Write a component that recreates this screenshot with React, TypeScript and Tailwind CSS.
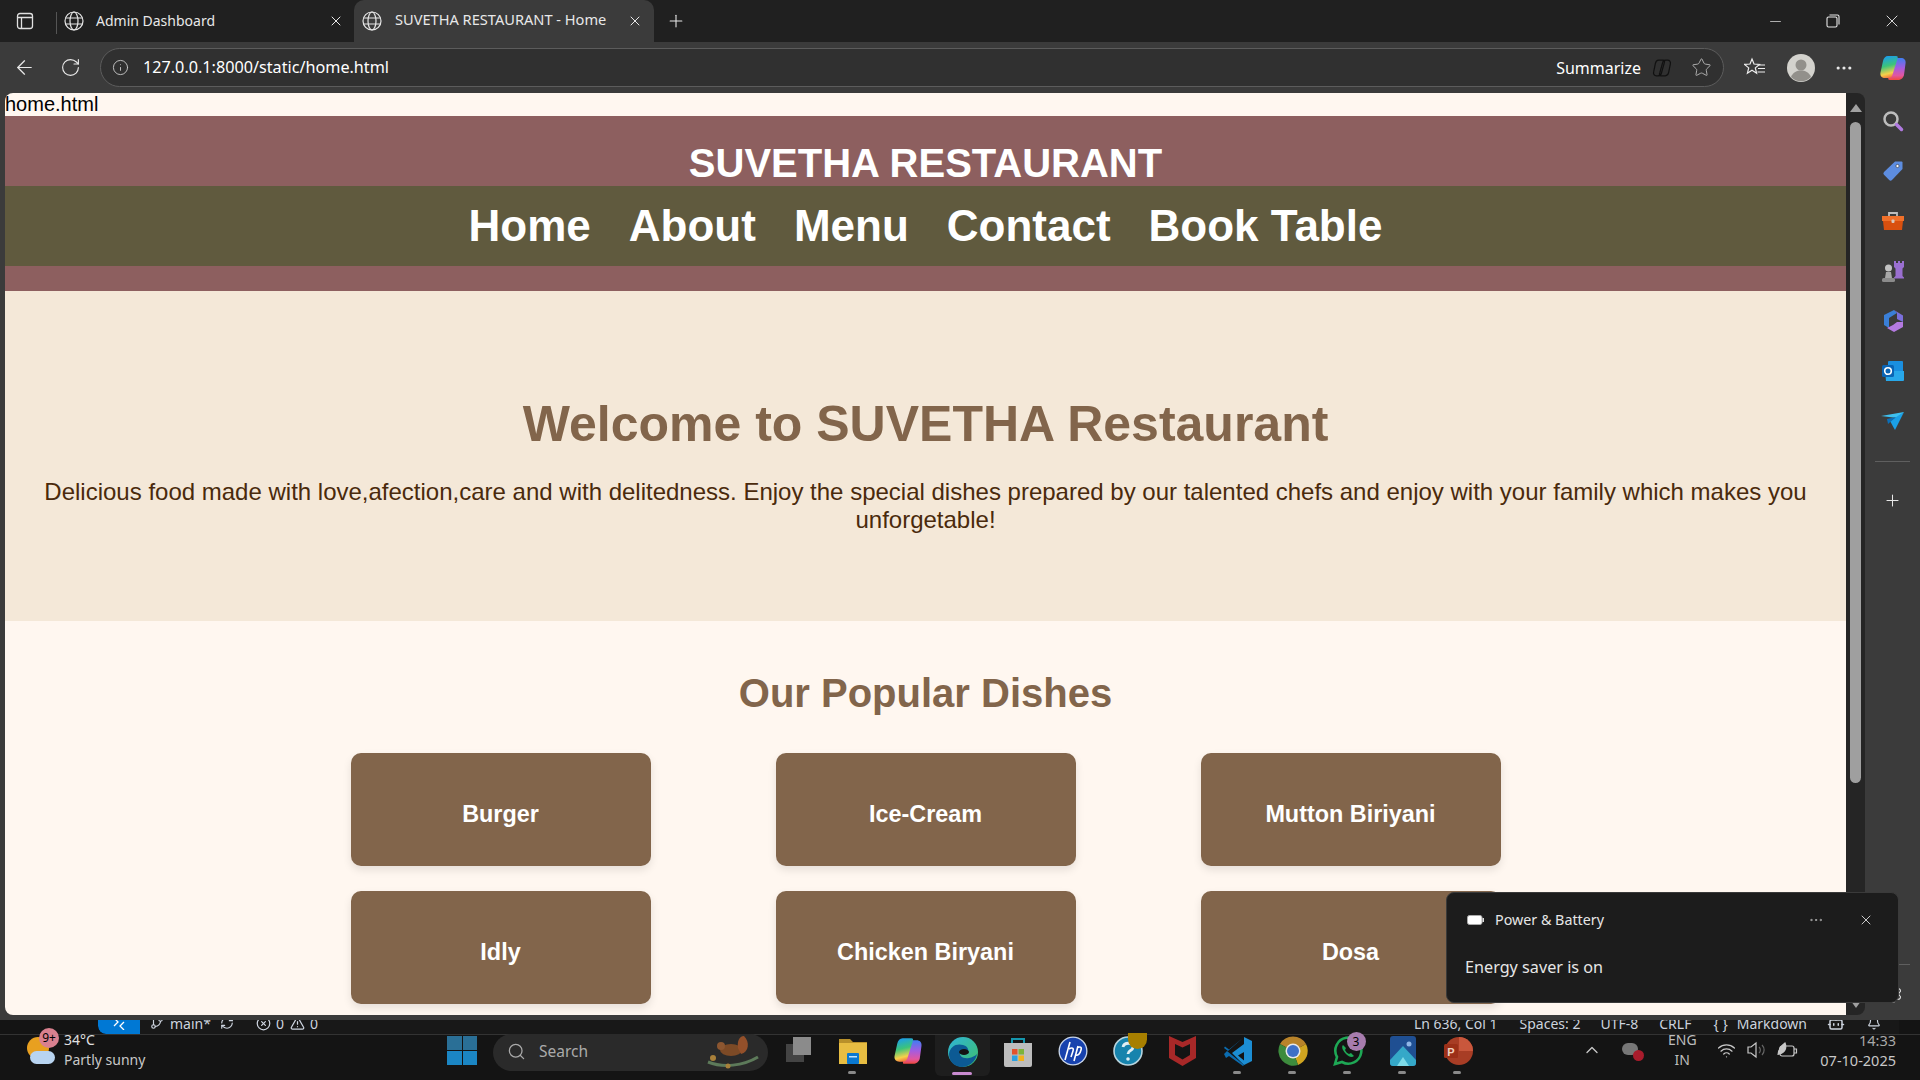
import React from 'react';
import { ArrowLeft, RotateCw, Info, Plus, X, Minus, Star, MoreHorizontal, ChevronUp, Wifi, Search, GitBranch, RefreshCw, CircleX, TriangleAlert, Bell, Bot, Settings } from 'lucide-react';

const uiFont = 'font-["Noto_Sans",sans-serif]';
const pageFont = 'font-["Liberation_Sans",Arial,sans-serif]';

const Globe = () => (
  <svg width="20" height="20" viewBox="0 0 20 20" fill="none" stroke="#e6e6e6" strokeWidth="1.2" className="shrink-0">
    <circle cx="10" cy="10" r="9" />
    <ellipse cx="10" cy="10" rx="4" ry="9" />
    <path d="M1.500 7h17M1.500 13h17" />
  </svg>
);

const Copilot = ({ size = 26 }: { size?: number }) => (
  <svg width={size} height={size} viewBox="0 0 28 28">
    <defs>
      <linearGradient id="cpa" x1="0.300" y1="0" x2="0.500" y2="1">
        <stop offset="0" stopColor="#1a9cf0" />
        <stop offset="0.45" stopColor="#3cc47a" />
        <stop offset="0.8" stopColor="#f6d14a" />
        <stop offset="1" stopColor="#f2703c" />
      </linearGradient>
      <linearGradient id="cpb" x1="0.500" y1="0" x2="0.500" y2="1">
        <stop offset="0" stopColor="#3f7ef0" />
        <stop offset="0.45" stopColor="#a45ce0" />
        <stop offset="0.8" stopColor="#e2569f" />
        <stop offset="1" stopColor="#f0483c" />
      </linearGradient>
    </defs>
    <path d="M19 26h-8c-2 0-2-1-1.400-3l5-16c.8-2.400 2-3 4-3h3.400c3 0 5 2 4.600 5L25 21c-.6 3-3.500 5-6 5z" fill="url(#cpb)" />
    <path d="M9 2h8c2 0 2 1 1.400 3l-5 16c-.8 2.400-2 3-4 3H6c-3 0-5-2-4.600-5L4 7c.6-3 2.500-5 5-5z" fill="url(#cpa)" />
  </svg>
);

const sideIcons = [
  <svg key="s" width="22" height="22" viewBox="0 0 22 22" fill="none">
    <circle cx="9" cy="9" r="6.500" stroke="#bdbdbd" strokeWidth="2.500" />
    <path d="M14.500 14.500l5 5" stroke="#b07ae0" strokeWidth="3.500" strokeLinecap="round" />
  </svg>,
  <svg key="t" width="22" height="22" viewBox="0 0 22 22">
    <path d="M13 1.500h6.500a1 1 0 011 1V9L10 20a2 2 0 01-2.800 0L2 14.800a2 2 0 010-2.800z" fill="#5d8de0" />
    <circle cx="15.500" cy="6" r="1.600" fill="#fff" stroke="#333" strokeWidth=".6" />
  </svg>,
  <svg key="b" width="24" height="22" viewBox="0 0 24 22">
    <path d="M8 6V3h8v3" fill="none" stroke="#bdbdbd" strokeWidth="1.800" />
    <rect x="1" y="6" width="22" height="5" fill="#f0702a" />
    <path d="M2 11h20l-1 9H3z" fill="#d9500f" />
    <rect x="10.500" y="9.500" width="3" height="3.500" rx="1" fill="#d8c9bd" />
  </svg>,
  <svg key="c" width="24" height="24" viewBox="0 0 24 24">
    <path d="M13 2h2v2h2V2h2v2h2V2h2v6l-1.500 1.500V17l1.500 1.500v1H13v-1l1.500-1.500V9.500L13 8z" fill="#9a6fd0" />
    <circle cx="7.500" cy="9" r="3.500" fill="#c2c2c2" />
    <path d="M5 13h5l1 6H4z" fill="#a8a8a8" />
    <rect x="1" y="19" width="13" height="4" rx="1.500" fill="#8b8b8b" />
  </svg>,
  <svg key="m" width="22" height="24" viewBox="0 0 22 24" fill="none">
    <path d="M12 1L2 6v10l5 3V9l8-5z" fill="#3a7fd8" />
    <path d="M12 1l9 5.500V13l-6-3V4z" fill="#7b6fdc" />
    <path d="M21 13v5l-9 5-7-4 6-3 4-3z" fill="#b47ae0" />
  </svg>,
  <svg key="o" width="22" height="22" viewBox="0 0 22 22">
    <rect x="6" y="1" width="15" height="12" rx="1" fill="#1a8fe0" />
    <path d="M3 11h19v9a1 1 0 01-1 1H4z" fill="#28a8ea" />
    <rect x="0" y="5" width="12" height="12" rx="1.500" fill="#0a64b4" />
    <circle cx="6" cy="11" r="3.300" fill="none" stroke="#fff" strokeWidth="1.600" />
  </svg>,
  <svg key="p" width="24" height="20" viewBox="0 0 24 20">
    <path d="M0 5l23-4-7 6z" fill="#3ec1f0" />
    <path d="M23 1l-9 18-5-9z" fill="#1ba0e6" />
    <path d="M6 8l9-2-8 7z" fill="#0b6fb8" />
  </svg>,
];

const TabBar = () => (
  <div className={`h-[42px] shrink-0 bg-[#202020] flex items-center text-[#e8e8e8] text-[14px] ${uiFont}`}>
    <div className="w-[56px] h-full flex items-center justify-center pr-[6px]">
      <svg width="18" height="18" viewBox="0 0 18 18" fill="none" stroke="#e0e0e0" strokeWidth="1.300">
        <rect x="1.500" y="1.500" width="15" height="15" rx="2.500" />
        <path d="M1.500 5.500h15M5.500 5.500v11" />
      </svg>
    </div>
    <div className="w-[298px] h-full flex items-center relative pl-[8px] pr-[10px]">
      <div className="absolute left-0 top-[12px] h-[22px] w-px bg-[#555]" />
      <Globe />
      <span className="ml-[12px] flex-1 -mt-[2px]">Admin Dashboard</span>
      <X size={16} strokeWidth={1.500} />
    </div>
    <div className="w-[300px] h-full bg-[#3b3b3b] rounded-t-[10px] flex items-center pl-[8px] pr-[11px]">
      <Globe />
      <span className="ml-[13px] flex-1 whitespace-nowrap text-[14.600px] -mt-[2px]">SUVETHA RESTAURANT - Home</span>
      <X size={16} strokeWidth={1.500} />
    </div>
    <Plus size={20} strokeWidth={1.300} className="ml-[12px]" />
    <div className="ml-auto flex items-center h-full">
      <div className="w-[58px] flex justify-center"><Minus size={17} strokeWidth={1} /></div>
      <div className="w-[58px] flex justify-center">
        <svg width="14" height="14" viewBox="0 0 14 14" fill="none" stroke="#e8e8e8" strokeWidth="1.100">
          <rect x="1" y="3" width="10" height="10" rx="1.500" />
          <path d="M3.500 1h8a1.500 1.500 0 011.500 1.500v8" />
        </svg>
      </div>
      <div className="w-[58px] flex justify-center pl-[1px]"><X size={20} strokeWidth={1.100} /></div>
    </div>
  </div>
);

const Toolbar = () => (
  <div className={`h-[51px] shrink-0 bg-[#3b3b3b] flex items-center text-[#e8e8e8] ${uiFont}`}>
    <div className="w-[48px] flex justify-center"><ArrowLeft size={23} strokeWidth={1.300} /></div>
    <div className="w-[44px] flex justify-center"><RotateCw size={21} strokeWidth={1.300} /></div>
    <div className="ml-[8px] w-[1624px] h-[39px] bg-[#303030] border border-[#5c5c5c] rounded-full flex items-center pl-[11px] pr-[11px]">
      <Info size={17} strokeWidth={1.300} className="text-[#c8c8c8]" />
      <span className="ml-[14px] text-[16.200px] text-white">127.0.0.1:8000/static/home.html</span>
      <span className="ml-auto text-[16px] text-white mt-[1px]">Summarize</span>
      <svg width="20" height="20" viewBox="0 0 18 18" fill="none" stroke="#111" strokeWidth="1.100" className="ml-[11px]">
        <path d="M6 2h4c1.500 0 1.500 1 1 2.500l-2.500 9C8 15.500 7 16 5.500 16H4c-2 0-3-1.500-2.500-3.500L3 5c.4-2 1.500-3 3-3z" />
        <path d="M12 16H8c-1.500 0-1.500-1-1-2.500l2.500-9C10 2.500 11 2 12.500 2H14c2 0 3 1.500 2.500 3.500L15 13c-.4 2-1.500 3-3 3z" />
      </svg>
      <Star size={21} strokeWidth={1.100} className="ml-[19px] text-[#b0b0b0]" />
    </div>
    <svg width="22" height="22" viewBox="0 0 22 22" fill="none" stroke="#eee" strokeWidth="1.200" className="ml-[20px]">
      <path d="M8 2l2 5 5.500.4-4.200 3.500 1.300 5.300L8 13.300l-4.600 2.900 1.300-5.300L.5 7.400 6 7z" />
      <path d="M15 8h6M14 11.500h7M13.500 15H21" />
    </svg>
    <svg width="28" height="28" viewBox="0 0 28 28" className="ml-[21px]">
      <circle cx="14" cy="14" r="14" fill="#d3d2cd" />
      <circle cx="14" cy="11" r="5.500" fill="#92908b" />
      <path d="M4 23c2-5 6-6.500 10-6.500s8 1.500 10 6.500a14 14 0 01-20 0z" fill="#92908b" />
    </svg>
    <MoreHorizontal size={20} strokeWidth={1.800} className="ml-[19px]" />
    <div className="ml-[25px]"><Copilot size={28} /></div>
  </div>
);

const dishes = ['Burger', 'Ice-Cream', 'Mutton Biriyani', 'Idly', 'Chicken Biryani', 'Dosa'];

const Page = () => (
  <div className={`flex-1 min-w-0 h-full overflow-hidden bg-[#fff7f0] rounded-l-[8px] text-[20px] leading-[23px] text-black ${pageFont}`}>
    <div>home.html</div>
    <header className="bg-[#8d5f5f] pb-[25px] text-white text-center">
      <h1 className="h-[70px] pt-[24px] text-[40px] leading-[46px] font-bold">SUVETHA RESTAURANT</h1>
      <nav className="h-[80px] bg-[#605a3e] flex items-center justify-center gap-[38px] text-[44px] leading-[50px] font-bold">
        <a>Home</a>
        <a>About</a>
        <a>Menu</a>
        <a>Contact</a>
        <a>Book Table</a>
      </nav>
    </header>
    <section className="h-[330px] bg-[#f4e8d8] text-center pt-[105px] px-[20px]">
      <h2 className="text-[50px] leading-[56px] font-bold text-[#82654b]">Welcome to SUVETHA Restaurant</h2>
      <p className="mt-[26px] text-[24px] leading-[28px] text-[#4a2a0c]">
        Delicious food made with love,afection,care and with delitedness. Enjoy the special dishes prepared by our talented chefs and enjoy with your family which makes you unforgetable!
      </p>
    </section>
    <section className="pt-[49px] text-center">
      <h2 className="text-[40px] leading-[46px] font-bold text-[#82654b]">Our Popular Dishes</h2>
      <div className="mt-[37px] grid grid-cols-[300px_300px_300px] gap-x-[125px] gap-y-[25px] justify-center">
        {dishes.map((d) => (
          <div key={d} className="h-[113px] pt-[9px] rounded-[10px] bg-[#82654b] shadow-[0_4px_8px_rgba(0,0,0,0.1)] flex items-center justify-center text-white text-[23.400px] font-bold">
            {d}
          </div>
        ))}
      </div>
    </section>
  </div>
);

const Scrollbar = () => (
  <div className="w-[19px] h-full shrink-0 bg-[#252525] rounded-r-[8px] flex flex-col items-center relative">
    <div className="mt-[11px] w-0 h-0 border-x-[6px] border-x-transparent border-b-[8px] border-b-[#a0a0a0]" />
    <div className="mt-[10px] w-[11px] h-[661px] rounded-full bg-[#9f9f9f]" />
    <div className="absolute bottom-[7px] w-0 h-0 border-x-[5px] border-x-transparent border-t-[7px] border-t-[#a0a0a0]" />
  </div>
);

const Sidebar = () => (
  <div className="w-[55px] h-full shrink-0 bg-[#3b3b3b] flex flex-col items-center pt-[3px] text-[#e8e8e8]">
    {sideIcons.map((ic) => (
      <div key={ic.key} className="w-full h-[50px] shrink-0 flex items-center justify-center">{ic}</div>
    ))}
    <div className="mt-[15px] w-[35px] h-px bg-[#5f5f5f]" />
    <Plus size={19} strokeWidth={1.300} className="mt-[29px]" />
    <div className="mt-[454px] w-[35px] h-px shrink-0 bg-[#5f5f5f]" />
    <Settings size={20} strokeWidth={1.300} className="mt-[19px] shrink-0" />
  </div>
);

const StatusBar = () => (
  <div className="h-[14px] shrink-0 bg-[#141414] overflow-hidden flex items-end">
    <div className="ml-[98px] w-[1801px] h-[22px] shrink-0 bg-[#181818] rounded-bl-[8px] flex items-center text-[14px] text-[#ccd3de] font-['Noto_Sans',sans-serif] overflow-hidden relative">
      <div className="w-[42px] h-full bg-[#0078d4] rounded-bl-[8px] flex items-center justify-center text-white text-[12px]">
        <svg width="14" height="14" viewBox="0 0 14 14" fill="none" stroke="#fff" strokeWidth="1.300"><path d="M2 2l4 4-4 4M12 6L8 10l4 4" /></svg>
      </div>
      <GitBranch size={14} className="ml-[10px]" />
      <span className="ml-[6px]">main*</span>
      <RefreshCw size={14} className="ml-[9px]" />
      <CircleX size={15} className="ml-[22px]" />
      <span className="ml-[5px]">0</span>
      <TriangleAlert size={15} className="ml-[6px]" />
      <span className="ml-[5px]">0</span>
      <div className="ml-auto flex items-center pr-[18px]">
        <span>Ln 636, Col 1</span>
        <span className="ml-[22px]">Spaces: 2</span>
        <span className="ml-[20px]">UTF-8</span>
        <span className="ml-[21px]">CRLF</span>
        <span className="ml-[22px]">{'{ }'}</span>
        <span className="ml-[9px]">Markdown</span>
        <Bot size={18} className="ml-[20px]" />
        <Bell size={14} className="ml-[22px]" />
      </div>
    </div>
  </div>
);

const Explorer = () => (
  <svg width="30" height="30" viewBox="0 0 30 30">
    <path d="M1 3h11l3 3h14v22H1z" fill="#b8902a" />
    <rect x="1" y="7" width="28" height="21" fill="#e7bd42" />
    <rect x="9" y="17" width="12" height="11" rx="1" fill="#0a78d0" />
    <rect x="11" y="20" width="8" height="1.500" fill="#bfe3ff" />
  </svg>
);
const Edge = () => (
  <svg width="32" height="32" viewBox="0 0 32 32">
    <defs>
      <linearGradient id="eg" x1="0" y1="0" x2="1" y2="1">
        <stop offset="0" stopColor="#2fb4d8" />
        <stop offset="1" stopColor="#3fbf6a" />
      </linearGradient>
    </defs>
    <circle cx="16" cy="16" r="15" fill="url(#eg)" />
    <path d="M2 18c1-8 8-11 14-9 4 1 6 4 5 7h-8c-1 4 3 7 9 6 3-.5 6-2 8-4-1 7-8 13-15 13C8 31 2 26 2 18z" fill="#0c5a94" />
    <ellipse cx="17" cy="16" rx="5" ry="3" fill="#141414" />
  </svg>
);
const Store = () => (
  <svg width="30" height="32" viewBox="0 0 30 32">
    <path d="M9 8V3h12v5" fill="none" stroke="#1596ad" strokeWidth="2" />
    <path d="M1 7h28v22a2 2 0 01-2 2H3a2 2 0 01-2-2z" fill="#bdbdbd" />
    <rect x="9" y="13" width="5.500" height="5.500" fill="#e2522b" />
    <rect x="15.500" y="13" width="5.500" height="5.500" fill="#7cb43a" />
    <rect x="9" y="19.500" width="5.500" height="5.500" fill="#2a9fe0" />
    <rect x="15.500" y="19.500" width="5.500" height="5.500" fill="#f2b21b" />
  </svg>
);
const Hp = () => (
  <svg width="30" height="30" viewBox="0 0 30 30">
    <circle cx="15" cy="15" r="14.500" fill="#c9d6e8" />
    <circle cx="15" cy="15" r="13.200" fill="#1742ae" />
    <path d="M12 6l-5 18M11 13c3-2 5-1 4 2l-2 6M20 10l-4 15M19 12c3-2 5-1 4 2-1 4-3 6-6 5" fill="none" stroke="#fff" strokeWidth="1.600" />
  </svg>
);
const Help = () => (
  <div className="relative w-[30px] h-[30px]">
    <svg width="30" height="30" viewBox="0 0 30 30">
      <circle cx="15" cy="15" r="14" fill="#1683ad" stroke="#b7d4de" strokeWidth="1.600" />
      <path d="M10 11c1-5 10-5 10 0 0 4-5 3-5 7" fill="none" stroke="#dfeef4" strokeWidth="2.800" />
      <circle cx="15" cy="23" r="1.800" fill="#dfeef4" />
    </svg>
    <div className="absolute -top-[3px] left-[15px] w-[19px] h-[16px] rounded-b-full bg-[#a77f00]" />
  </div>
);
const McAfee = () => (
  <svg width="27" height="30" viewBox="0 0 27 30">
    <path d="M0 0l13.500 6L27 0v22l-13.500 8L0 22z" fill="#a82828" />
    <path d="M6 8l7.500 3.500L21 8v11l-7.500 4.500L6 19z" fill="#141414" />
  </svg>
);
const VsCode = () => (
  <svg width="30" height="30" viewBox="0 0 30 30">
    <path d="M21 1l8 4v20l-8 4-12-12 12-9v8l-6 3.500 6 5z" fill="#1c8ed4" />
    <path d="M21 1L5 15l-4-3 1-1.500 4 3L21 1zM1 18l3-3 17 14-1 1-14-10-3 2z" fill="#0b6cb0" />
  </svg>
);
const Chrome = () => (
  <svg width="30" height="30" viewBox="0 0 30 30">
    <path d="M15 15L2 8a15 15 0 0126 0z" fill="#b8832a" />
    <path d="M15 15L28 8a15 15 0 01-8 21z" fill="#d0a520" />
    <path d="M15 15l5 14A15 15 0 012 8z" fill="#3d8b3d" />
    <circle cx="15" cy="15" r="7.500" fill="#e8e8e8" />
    <circle cx="15" cy="15" r="6" fill="#3e70c8" />
  </svg>
);
const WhatsApp = () => (
  <div className="relative w-[30px] h-[30px]">
    <svg width="30" height="30" viewBox="0 0 30 30" fill="none">
      <path d="M2 28l2-7a13 13 0 115 5z" stroke="#1ea855" strokeWidth="2.600" />
      <path d="M10 9c-2 2 0 6 3 9s6 4 8 2l-3-3-2 1c-2-1-3-2-4-4l1-2z" fill="#1ea855" />
    </svg>
    <div className="absolute -top-[4px] left-[14px] w-[19px] h-[19px] rounded-full bg-[#a77cae] text-black text-[12px] leading-[19px] text-center">3</div>
  </div>
);
const Photos = () => (
  <svg width="26" height="30" viewBox="0 0 26 30">
    <rect width="26" height="30" rx="3" fill="#1f4f92" />
    <circle cx="19" cy="8" r="2.500" fill="#8fb6e6" />
    <path d="M0 24l13-14 13 14v3a3 3 0 01-3 3H3a3 3 0 01-3-3z" fill="#35a8c8" />
    <path d="M7 30l6-9 6 9z" fill="#7edbe8" />
  </svg>
);
const PowerPoint = () => (
  <svg width="30" height="30" viewBox="0 0 30 30">
    <circle cx="16" cy="15" r="14" fill="#a83d25" />
    <path d="M16 1a14 14 0 0114 14H16z" fill="#c9573c" />
    <rect x="1" y="8" width="14" height="14" rx="1.500" fill="#9c3018" />
    <text x="8" y="19.500" fontSize="11" fontWeight="700" fill="#f0d0c0" textAnchor="middle" fontFamily="Liberation Sans">P</text>
  </svg>
);

const taskIcons: { el: React.ReactNode; dot?: boolean; active?: boolean }[] = [
  { el: <div className="relative w-[28px] h-[28px]"><div className="absolute left-[2px] top-[8px] w-[18px] h-[18px] bg-[#444]" /><div className="absolute left-[9px] top-[1px] w-[18px] h-[18px] bg-[#8b8b8b]" /></div> },
  { el: <Explorer />, dot: true },
  { el: <Copilot size={30} /> },
  { el: <Edge />, active: true },
  { el: <Store /> },
  { el: <Hp /> },
  { el: <Help /> },
  { el: <McAfee /> },
  { el: <VsCode />, dot: true },
  { el: <Chrome />, dot: true },
  { el: <WhatsApp />, dot: true },
  { el: <Photos />, dot: true },
  { el: <PowerPoint />, dot: true },
];

const Taskbar = () => (
  <div className={`h-[46px] shrink-0 bg-[#141414] border-t border-[#333] flex text-[#c8c8c8] ${uiFont}`}>
    <div className="w-[447px] shrink-0 relative pl-[27px] pt-[2px] flex items-start">
      <div className="relative w-[28px] h-[27px] shrink-0">
        <div className="absolute left-0 top-0 w-[22px] h-[22px] rounded-full bg-[#e8a020]" />
        <div className="absolute left-[3px] bottom-0 w-[25px] h-[13px] rounded-full bg-[#b8d4f0]" />
      </div>
      <div className="ml-[9px] text-[14px] leading-[20px] -mt-[7px]">
        <div className="text-[#e0e0e0]">34°C</div>
        <div>Partly sunny</div>
      </div>
      <div className="absolute left-[39px] -top-[7px] w-[20px] h-[20px] rounded-full bg-[#d9808f] text-black text-[12px] leading-[20px] text-center">9+</div>
    </div>
    <div className="w-[30px] h-[29px] mt-[1px] shrink-0 grid grid-cols-2 gap-[1px]">
      <div className="bg-[#2a6f96]" />
      <div className="bg-[#2a6f96]" />
      <div className="bg-[#1b86c4]" />
      <div className="bg-[#1b86c4]" />
    </div>
    <div className="ml-[16px] w-[275px] h-[37px] -mt-[1px] shrink-0 rounded-full bg-[#2a2a2a] flex items-center pl-[14px] pr-[4px] pb-[2px] text-[15.500px] text-[#aaa]">
      <Search size={19} strokeWidth={1.600} />
      <span className="ml-[13px]">Search</span>
      <svg width="60" height="36" viewBox="0 0 60 36" className="ml-auto">
        <path d="M4 28c15 6 35 4 50-5" fill="none" stroke="#5d7a5a" strokeWidth="3" />
        <ellipse cx="27" cy="16" rx="11" ry="6" fill="#7c4a26" />
        <circle cx="17" cy="12" r="4" fill="#8c5630" />
        <path d="M37 20c8-2 9-12 3-18-5 0-7 6-6 12z" fill="#94502a" />
        <circle cx="9" cy="24" r="3" fill="#a8803a" />
        <circle cx="24" cy="32" r="2.500" fill="#a8803a" />
      </svg>
    </div>
    <div className="ml-[2px] flex">
      {taskIcons.map((t, i) => (
        <div key={i} className={`w-[55px] h-[41px] shrink-0 relative flex justify-center pt-[1px] ${t.active ? 'rounded-b-[6px] bg-[#1e1e1e]' : ''}`}>
          {t.el}
          {t.dot && <div className="absolute bottom-[2px] left-[23px] w-[8px] h-[3px] rounded-full bg-[#8a8a8a]" />}
          {t.active && <div className="absolute bottom-[1px] left-[17px] w-[20px] h-[3px] rounded-full bg-[#c98bd0]" />}
        </div>
      ))}
    </div>
    <div className="flex-1 flex items-center justify-end pr-[24px] pb-[15px] text-[14px]">
      <ChevronUp size={20} strokeWidth={1.600} className="mr-[20px]" />
      <div className="relative w-[20px] h-[14px] mr-[24px]">
        <div className="absolute left-0 top-0 w-[16px] h-[12px] rounded-full bg-[#777]" />
        <div className="absolute right-[-2px] bottom-[-4px] w-[11px] h-[11px] rounded-full bg-[#a81c2c]" />
      </div>
      <div className="w-[32px] text-center leading-[20px] text-[#bdbdbd] mr-[19px]">
        <div>ENG</div>
        <div>IN</div>
      </div>
      <Wifi size={19} strokeWidth={1.600} className="mr-[11px]" />
      <svg width="20" height="18" viewBox="0 0 20 18" fill="none" stroke="#c8c8c8" strokeWidth="1.200" className="mr-[9px]">
        <path d="M1 6h3l5-4v14l-5-4H1z" />
        <path d="M12 6a4 4 0 010 6M15 4a7 7 0 010 10" stroke="#666" />
      </svg>
      <svg width="22" height="18" viewBox="0 0 22 18" fill="none" stroke="#c8c8c8" strokeWidth="1.200" className="mr-[22px]">
        <rect x="4" y="5" width="14" height="10" rx="2" />
        <path d="M18 8h2.500v4H18" />
        <path d="M2 14c0-6 3-9 7-12 2 5 0 10-6 11" fill="#c8c8c8" />
      </svg>
      <div className="text-right leading-[20px] text-[14.500px] whitespace-nowrap">
        <div className="text-[#a8a8a8]">14:33</div>
        <div>07-10-2025</div>
      </div>
    </div>
  </div>
);

export default function App() {
  return (
    <div className="w-[1920px] h-[1080px] overflow-hidden bg-[#3b3b3b] flex flex-col relative">
      <TabBar />
      <Toolbar />
      <div className="h-[922px] shrink-0 pl-[5px] flex">
        <Page />
        <Scrollbar />
        <Sidebar />
      </div>
      <div className="h-[5px] shrink-0 bg-[#3b3b3b]" />
      <StatusBar />
      <Taskbar />

      {/* windows toast, sits over everything */}
      <div className={`absolute left-[1446px] top-[892px] w-[453px] h-[111px] rounded-[8px] bg-[#1c1c1c] border border-[#3a3a3a] text-[#e6e6e6] ${uiFont}`}>
        <div className="flex items-center h-[54px] pl-[20px] pr-[24px] text-[14.300px]">
          <svg width="17" height="10" viewBox="0 0 17 10"><rect x=".5" y=".5" width="14.500" height="9" rx="2" fill="#fff" stroke="#aaa" /><rect x="15.500" y="3" width="1.500" height="4" fill="#ddd" /></svg>
          <span className="ml-[11px]">Power & Battery</span>
          <MoreHorizontal size={16} strokeWidth={1.500} className="ml-auto mr-[1px] text-[#aaa]" />
          <X size={16} strokeWidth={1.300} className="ml-[33px]" />
        </div>
        <div className="pl-[18px] pt-[8px] text-[16.200px]">Energy saver is on</div>
      </div>
    </div>
  );
}
